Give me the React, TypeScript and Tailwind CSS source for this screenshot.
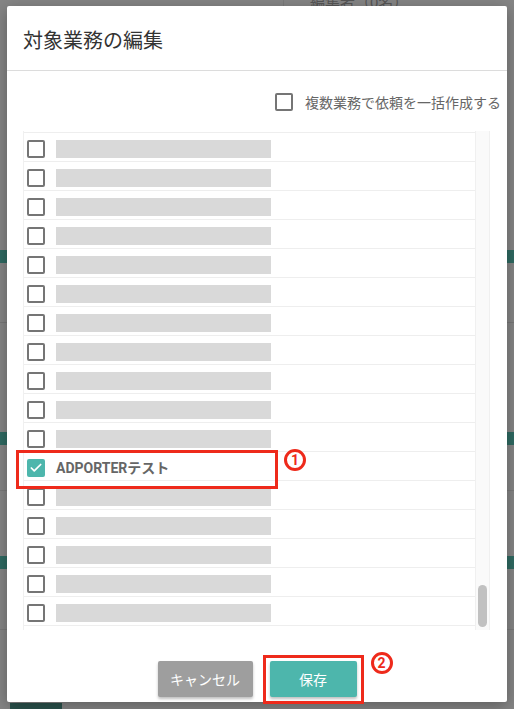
import { Check } from 'lucide-react'

const JP = "font-['Noto_Sans_CJK_JP',sans-serif]"

function Box({ checked = false }: { checked?: boolean }) {
  if (checked) {
    return (
      <span className="w-[18px] h-[18px] rounded-[2px] bg-[#4db6ac] flex items-center justify-center shrink-0">
        <Check size={14} strokeWidth={3} className="text-white" />
      </span>
    )
  }
  return <span className="w-[18px] h-[18px] rounded-[2px] border-2 border-[#757575] bg-white shrink-0" />
}

function Mark({ n }: { n: string }) {
  return (
    <span className="w-[22px] h-[22px] rounded-full border-[3px] border-[#ee2a1b] flex items-center justify-center text-[#ee2a1b] text-[14px] font-bold leading-none font-['Roboto',sans-serif]">
      {n}
    </span>
  )
}

export default function App() {
  const rows = Array.from({ length: 18 }, (_, i) => i)

  return (
    <div className={`relative w-[514px] h-[709px] overflow-hidden bg-[#858585] ${JP}`}>
      {/* dimmed page behind */}
      <div className="absolute left-[283px] top-0 w-px h-[30px] bg-[#7a7a7a]" />
      <div className="absolute left-[310px] top-[-6px] text-[15px] leading-[15px] text-[#555]">編集者（0名）</div>
      <div className="absolute left-0 right-0 top-[250px] h-[13px] bg-[#2f6a62]" />
      <div className="absolute left-0 right-0 top-[432px] h-[13px] bg-[#2f6a62]" />
      <div className="absolute left-0 right-0 top-[556px] h-[13px] bg-[#2f6a62]" />
      <div className="absolute left-0 right-0 top-[322px] h-px bg-[#777]" />
      <div className="absolute left-0 right-0 top-[490px] h-px bg-[#7a7a7a]" />
      <div className="absolute left-0 right-0 top-[629px] h-px bg-[#7a7a7a]" />
      <div className="absolute left-[10px] top-[703px] w-[52px] h-[6px] bg-[#2a524c]" />

      {/* modal */}
      <div className="absolute left-[7px] top-[6px] w-[500px] h-[696px] bg-white rounded-[2px] shadow-[0_4px_16px_rgba(0,0,0,0.3)] flex flex-col">
        <div className="h-[65px] border-b border-[#dcdcdc] flex items-center pl-4 pt-[3px]">
          <h2 className="text-[20px] text-[#333]">対象業務の編集</h2>
        </div>

        <div className="flex justify-end gap-3 pr-[6px] pt-[22px] h-[60px] items-start">
          <Box />
          <span className="text-[14px] text-[#666] leading-[19px]">複数業務で依頼を一括作成する</span>
        </div>

        <div className="relative ml-4 w-[467px] h-[499px] flex">
          <div className="flex-1 h-full overflow-hidden border-l border-[#f0f0f0]">
            <div className="mt-[-27px]">
              {rows.map((i) => {
                const isTarget = i === 12
                return (
                  <div key={i} className="h-[29px] border-b border-[#eeeeee] flex items-start pt-[7px] pl-[3px] gap-[11px]">
                    <Box checked={isTarget} />
                    {isTarget ? (
                      <span className="text-[14px] font-bold text-[#666] leading-[18px] font-['Roboto','Noto_Sans_CJK_JP',sans-serif]">
                        ADPORTERテスト
                      </span>
                    ) : (
                      <span className="w-[215px] h-[18px] bg-[#d9d9d9]" />
                    )}
                  </div>
                )
              })}
            </div>
          </div>
          <div className="w-[15px] h-full bg-[#fafafa] border-x border-[#f0f0f0] flex flex-col justify-end items-center pb-[3px]">
            <div className="w-[9px] h-[42px] rounded-full bg-[#c1c1c1]" />
          </div>
          {/* annotation ① */}
          <div className="absolute left-[-7px] top-[319px] w-[262px] h-[39px] border-[3px] border-[#ee2a1b]" />
          <div className="absolute left-[261px] top-[318px]">
            <Mark n="1" />
          </div>
        </div>

        <div className="flex justify-center gap-[17px] pt-[31px]">
          <button className="w-[95px] h-[36px] rounded-[2px] bg-[#9e9e9e] text-white text-[14px] shadow-[0_2px_3px_rgba(0,0,0,0.25)]">
            キャンセル
          </button>
          <div className="relative">
            <button className="w-[87px] h-[36px] rounded-[2px] bg-[#4db6ac] text-white text-[14px] shadow-[0_2px_3px_rgba(0,0,0,0.25)]">
              保存
            </button>
            <div className="absolute left-[-7px] top-[-6px] w-[101px] h-[49px] border-[3px] border-[#ee2a1b]" />
            <div className="absolute left-[101px] top-[-9px]">
              <Mark n="2" />
            </div>
          </div>
        </div>
      </div>
    </div>
  )
}
